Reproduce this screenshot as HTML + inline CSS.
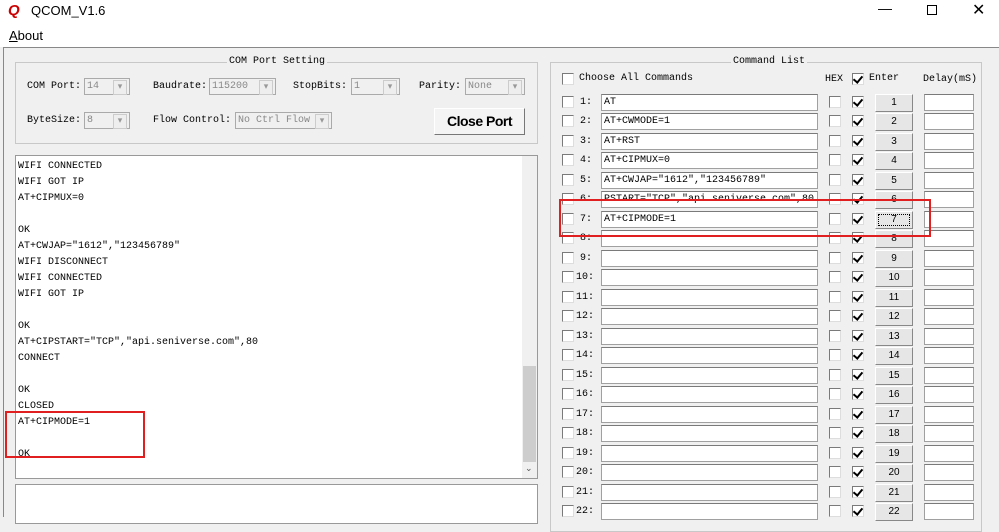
<!DOCTYPE html>
<html><head><style>
*{margin:0;padding:0;box-sizing:border-box}
body{width:999px;height:517px;overflow:hidden;background:#f0f0f0;font-family:"Liberation Mono",monospace;font-size:10px;color:#000;position:relative}
.a{position:absolute}
.ui{font-family:"Liberation Sans",sans-serif}
.inp{position:absolute;background:#fff;border:1px solid #a0a0a0;border-top-color:#7a7a7a;height:17px;padding:1px 2px;font-size:10px;line-height:14px;white-space:nowrap;overflow:hidden}
.cb{position:absolute;width:12px;height:12px;background:#fff;border:1px solid #7a7a7a;border-right-color:#ddd;border-bottom-color:#ddd}
.cb.k::after{content:"";position:absolute;left:2px;top:0px;width:4px;height:7px;border:solid #000;border-width:0 2px 2px 0;transform:rotate(40deg)}
.btn{position:absolute;width:38px;height:18px;background:#e6e6e6;border:1px solid #fff;border-right-color:#888;border-bottom-color:#888;text-align:center;line-height:16px;font-family:"Liberation Sans",sans-serif;font-size:10px}
.sel{position:absolute;height:17px;background:#f0f0f0;border:1px solid #aaa;color:#888;padding:1px 2px;line-height:14px}
.sel::after{content:"▾";position:absolute;right:2px;top:1px;width:12px;height:13px;border:1px solid #ccc;background:#eee;color:#999;text-align:center;font-size:9px;line-height:12px}
.grp{position:absolute;border:1px solid #c8c8c8}
.lbl{position:absolute;white-space:nowrap}
</style></head><body>
<div class="a" style="left:0;top:0;width:999px;height:47px;background:#fff"></div>
<div class="a ui" style="left:8px;top:2px;font-size:15px;font-weight:bold;color:#c00;font-style:italic">Q</div>
<div class="a ui" style="left:31px;top:3px;font-size:13px">QCOM_V1.6</div>
<div class="a ui" style="left:878px;top:0;font-size:14px">—</div>
<div class="a" style="left:927px;top:5px;width:10px;height:10px;border:1px solid #000"></div>
<div class="a ui" style="left:972px;top:0;font-size:16px">✕</div>
<div class="a ui" style="left:9px;top:28px;font-size:13px"><u>A</u>bout</div>
<div class="a" style="left:3px;top:47px;width:996px;height:1px;background:#888"></div>
<div class="a" style="left:3px;top:48px;width:1px;height:469px;background:#888"></div>

<!-- COM Port Setting -->
<div class="grp" style="left:15px;top:62px;width:523px;height:82px"></div>
<div class="lbl" style="left:227px;top:56px;background:#f0f0f0;padding:0 2px">COM Port Setting</div>
<div class="lbl" style="left:27px;top:81px">COM Port:</div><div class="sel" style="left:84px;top:78px;width:46px">14</div>
<div class="lbl" style="left:153px;top:81px">Baudrate:</div><div class="sel" style="left:209px;top:78px;width:67px">115200</div>
<div class="lbl" style="left:293px;top:81px">StopBits:</div><div class="sel" style="left:351px;top:78px;width:49px">1</div>
<div class="lbl" style="left:419px;top:81px">Parity:</div><div class="sel" style="left:465px;top:78px;width:60px">None</div>
<div class="lbl" style="left:27px;top:115px">ByteSize:</div><div class="sel" style="left:84px;top:112px;width:46px">8</div>
<div class="lbl" style="left:153px;top:115px">Flow Control:</div><div class="sel" style="left:235px;top:112px;width:97px">No Ctrl Flow</div>
<div class="a ui" style="left:434px;top:108px;width:91px;height:27px;background:#f4f4f4;border:1px solid #fff;border-right-color:#777;border-bottom-color:#777;font-size:14px;font-weight:bold;text-align:center;line-height:25px;letter-spacing:-0.5px">Close Port</div>

<!-- receive -->
<div class="a" style="left:15px;top:155px;width:523px;height:324px;background:#fff;border:1px solid #999"></div>
<div class="a" style="left:522px;top:156px;width:15px;height:322px;background:#f0f0f0"></div>
<div class="a" style="left:523px;top:366px;width:13px;height:96px;background:#cdcdcd"></div>
<div class="a" style="left:525px;top:464px;font-size:9px;color:#555">⌄</div>
<div class="a" style="left:18px;top:159px;line-height:16px;white-space:pre">WIFI CONNECTED
WIFI GOT IP
AT+CIPMUX=0

OK
AT+CWJAP="1612","123456789"
WIFI DISCONNECT
WIFI CONNECTED
WIFI GOT IP

OK
AT+CIPSTART="TCP","api.seniverse.com",80
CONNECT

OK
CLOSED
AT+CIPMODE=1

OK</div>
<div class="a" style="left:5px;top:411px;width:140px;height:47px;border:2px solid #e02020"></div>
<div class="a" style="left:15px;top:484px;width:523px;height:40px;background:#fff;border:1px solid #999"></div>

<!-- command list -->
<div class="grp" style="left:550px;top:62px;width:432px;height:470px"></div>
<div class="lbl" style="left:731px;top:56px;background:#f0f0f0;padding:0 2px">Command List</div>
<div class="cb" style="left:562px;top:73px"></div>
<div class="lbl" style="left:579px;top:73px">Choose All Commands</div>
<div class="lbl" style="left:825px;top:74px">HEX</div>
<div class="cb k" style="left:852px;top:73px"></div>
<div class="lbl" style="left:869px;top:73px">Enter</div>
<div class="lbl" style="left:923px;top:74px">Delay(mS)</div>
<div id="rows"></div>
<div class="a" style="left:559px;top:199px;width:372px;height:38px;border:2px solid #e02020"></div>
<script>
var c=["AT","AT+CWMODE=1","AT+RST","AT+CIPMUX=0",'AT+CWJAP="1612","123456789"','PSTART="TCP","api.seniverse.com",80',"AT+CIPMODE=1"],h="";
for(var i=0;i<22;i++){var y=Math.round(94+i*19.48);
h+='<div class="cb" style="left:562px;top:'+(y+2)+'px"></div><div class="lbl" style="left:'+(i<9?580:576)+'px;top:'+(y+3)+'px">'+(i+1)+':</div>'+
'<div class="inp" style="left:601px;top:'+y+'px;width:217px">'+(c[i]||"")+'</div>'+
'<div class="cb" style="left:829px;top:'+(y+2)+'px"></div><div class="cb k" style="left:852px;top:'+(y+2)+'px"></div>'+
'<div class="btn" style="left:875px;top:'+y+'px'+(i==6?';outline:1px dotted #000;outline-offset:-4px':'')+'">'+(i+1)+'</div>'+
'<div class="inp" style="left:924px;top:'+y+'px;width:50px"></div>';}
document.getElementById("rows").innerHTML=h;
</script>
</body></html>
